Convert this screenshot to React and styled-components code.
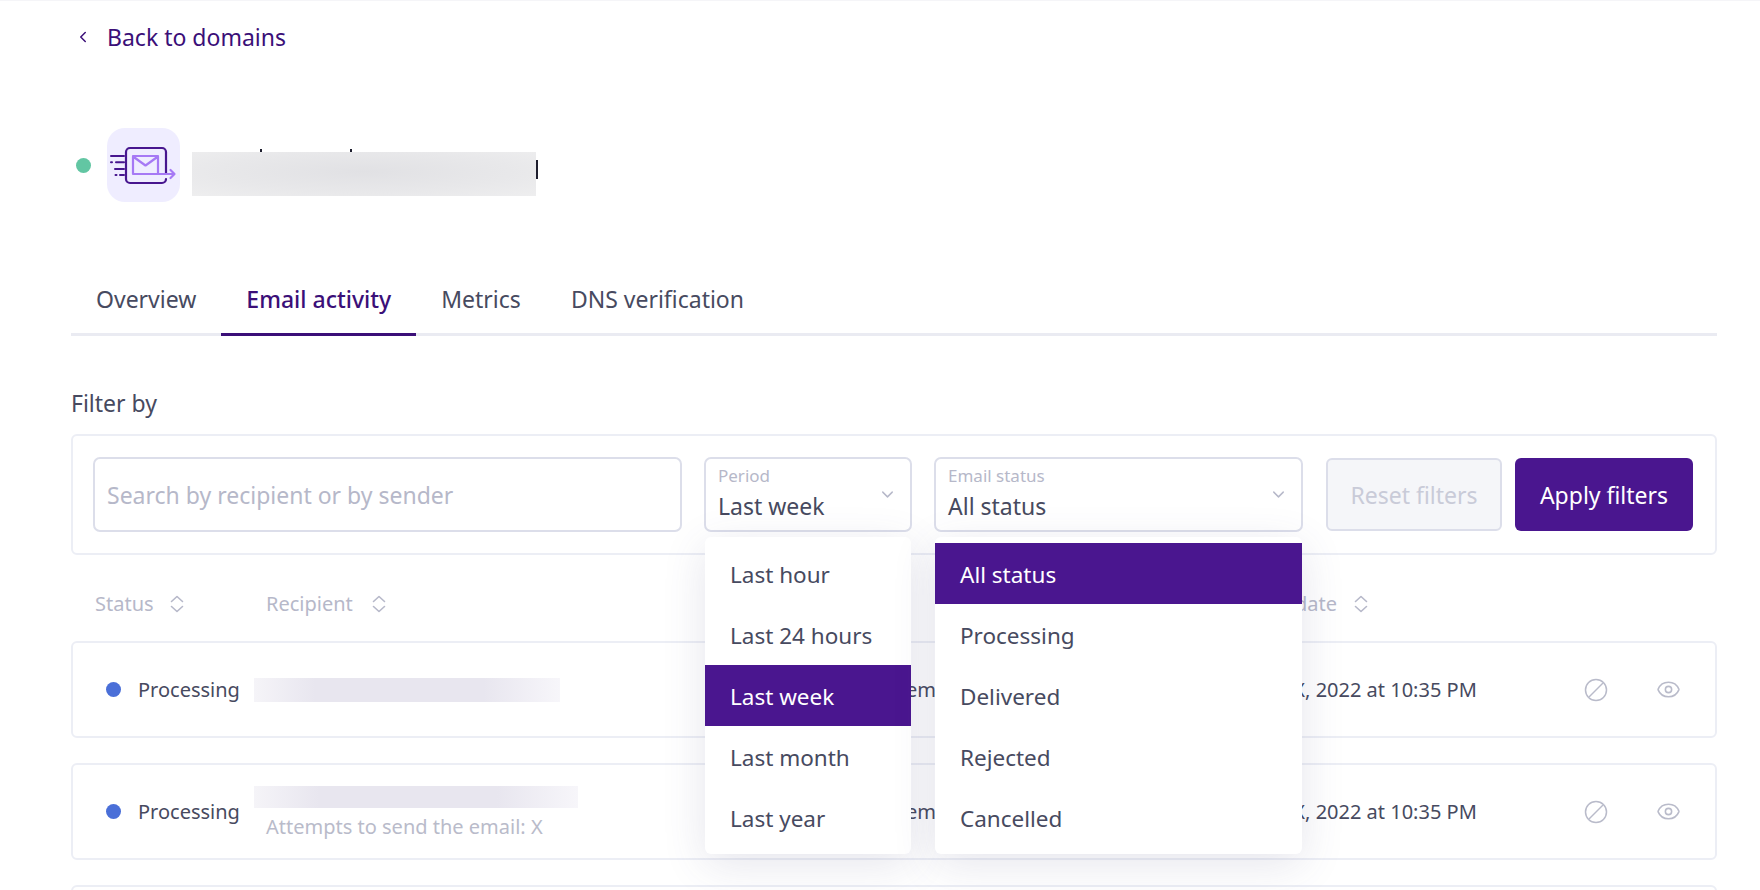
import styled, { createGlobalStyle } from "styled-components";
import { ChevronLeft, ChevronDown, Eye } from "lucide-react";

const GlobalStyle = createGlobalStyle`
  html, body { margin: 0; padding: 0; background: #ffffff; }
  body {
    font-family: "Noto Sans", "Open Sans", sans-serif;
    color: #474a60;
    overflow: hidden;
    height: 890px;
  }
`;

const Page = styled.div`
  height: 890px;
  box-sizing: border-box;
  padding: 0 43px 0 71px;
  overflow: hidden;
  border-top: 1px solid #f5f5f8;
`;

const BackLink = styled.a`
  display: flex;
  align-items: center;
  height: 72px;
  gap: 15px;
  color: #3b0f78;
  font-size: 23px;
  margin-left: 3px;
`;

const DomainHead = styled.div`
  display: flex;
  align-items: center;
  margin-top: 55px;
  height: 74px;
`;

const StatusDot = styled.span`
  flex: none;
  width: 15px;
  height: 15px;
  border-radius: 50%;
  background: ${(p) => p.$color};
`;

const HeadDot = styled(StatusDot)`
  margin-left: 5px;
`;

const LogoTile = styled.div`
  width: 73px;
  height: 74px;
  margin-left: 16px;
  border-radius: 18px;
  background: #efedff;
  svg { display: block; }
`;

const RedactedTitle = styled.div`
  position: relative;
  align-self: flex-start;
  width: 344px;
  height: 44px;
  margin: 24px 0 0 12px;
  background: radial-gradient(ellipse at 50% 45%, #e1e1e4 0%, #e8e8ea 60%, #eeeeef 100%);

  &::before, &::after {
    content: "";
    position: absolute;
    background: #1e1e2e;
  }
  &::before { left: 68px; top: -3px; width: 2px; height: 3px; box-shadow: 90px 0 0 #1e1e2e; }
  &::after { right: -2px; top: 8px; width: 2px; height: 19px; }
`;

const TabBar = styled.div`
  display: flex;
  margin-top: 70px;
  border-bottom: 3px solid #eaebf2;
`;

const Tab = styled.div`
  padding: 0 25px;
  height: 61px;
  line-height: 54px;
  font-size: 23px;
  font-weight: ${(p) => (p.$active ? 500 : 400)};
  margin-bottom: -3px;
  box-sizing: content-box;
  color: ${(p) => (p.$active ? "#3b0f78" : "#474a60")};
  border-bottom: 3px solid ${(p) => (p.$active ? "#3b0f78" : "transparent")};
`;

const FilterTitle = styled.div`
  margin-top: 51px;
  height: 32px;
  line-height: 32px;
  font-size: 23px;
`;

const FilterPanel = styled.div`
  display: flex;
  align-items: center;
  margin-top: 15px;
  height: 121px;
  box-sizing: border-box;
  padding: 0 22px 0 20px;
  border: 2px solid #eceef5;
  border-radius: 6px;
`;

const SearchBox = styled.div`
  width: 589px;
  height: 75px;
  box-sizing: border-box;
  padding: 0 12px;
  display: flex;
  align-items: center;
  border: 2px solid #dcdeea;
  border-radius: 7px;
  font-size: 23px;
  color: #b6b8c9;
`;

const SelectWrap = styled.div`
  position: relative;
  flex: none;
  width: ${(p) => p.$width}px;
  height: 75px;
  margin-left: ${(p) => p.$gap}px;
  box-sizing: border-box;
  padding: 7px 12px 0;
  border: 2px solid #dcdeea;
  border-radius: 7px;
  background: #fff;
`;

const SelectLabel = styled.div`
  font-size: 17px;
  line-height: 20px;
  color: #b6b8c9;
`;

const SelectValue = styled.div`
  font-size: 23px;
  line-height: 30px;
  margin-top: 5px;
`;

const SelectChevron = styled(ChevronDown)`
  position: absolute;
  right: 13px;
  top: 26px;
  color: #b6b8c9;
`;

const Menu = styled.div`
  position: absolute;
  left: -1px;
  right: -1px;
  top: 78px;
  z-index: 5;
  padding: 6px 0;
  background: #fff;
  border-radius: 6px;
  box-shadow: 0 10px 44px rgba(70, 70, 120, 0.14);
`;

const MenuItem = styled.div`
  height: 61px;
  line-height: 63px;
  padding-left: 25px;
  font-size: 22.5px;
  color: ${(p) => (p.$selected ? "#fff" : "#474a60")};
  background: ${(p) => (p.$selected ? "#4a168f" : "transparent")};
`;

const ResetButton = styled.div`
  width: 176px;
  height: 73px;
  margin-left: 23px;
  box-sizing: border-box;
  display: flex;
  align-items: center;
  justify-content: center;
  font-size: 23px;
  color: #c9cbd8;
  background: #f5f6f9;
  border: 2px solid #dcdeea;
  border-radius: 6px;
`;

const ApplyButton = styled.div`
  width: 178px;
  height: 73px;
  margin-left: 13px;
  display: flex;
  align-items: center;
  justify-content: center;
  font-size: 23px;
  color: #fff;
  background: #4a168f;
  border-radius: 6px;
`;

const rowColumns = "171px 500px 192px 560px 1fr";

const TableHead = styled.div`
  display: grid;
  grid-template-columns: ${rowColumns};
  align-items: center;
  height: 86px;
  box-sizing: border-box;
  padding-top: 11px;
  font-size: 20px;
  color: #b6b8c9;
`;

const HeadCell = styled.div`
  display: flex;
  align-items: center;
  gap: ${(p) => p.$gap || 17}px;
  padding-left: ${(p) => p.$pad || 0}px;
`;

const Row = styled.div`
  display: grid;
  grid-template-columns: ${rowColumns};
  align-items: center;
  height: 97px;
  box-sizing: border-box;
  margin-bottom: 25px;
  border: 2px solid #eceef5;
  border-radius: 6px;
  font-size: 20px;
`;

const StatusCell = styled.div`
  display: flex;
  align-items: center;
  gap: 17px;
  padding-left: 33px;
`;

const RecipientCell = styled.div`
  align-self: stretch;
  display: flex;
  flex-direction: column;
  justify-content: ${(p) => (p.$top ? "flex-start" : "center")};
  padding-top: ${(p) => (p.$top ? 21 : 0)}px;
`;

const Redacted = styled.div`
  height: ${(p) => p.$height}px;
  width: ${(p) => p.$width}px;
  margin-left: 10px;
  background: linear-gradient(90deg, #f5f4f8 0%, #e8e6ef 20%, #e8e6ef 75%, #f7f6fa 100%);
`;

const Attempts = styled.div`
  margin: 6px 0 0 22px;
  font-size: 20px;
  line-height: 26px;
  color: #b9bbca;
`;

const SubjectCell = styled.div`
  text-align: right;
  white-space: nowrap;
`;

const DateCell = styled.div`
  white-space: nowrap;
  padding-left: 317px;
`;

const Actions = styled.div`
  display: flex;
  align-items: center;
  gap: 48px;
  padding-left: 88px;
  color: #b9bbca;
  svg { display: block; }
`;

const SortIcon = () => (
  <svg width="14" height="18" viewBox="0 0 14 18" fill="none" stroke="#b6b8c9" strokeWidth="1.6" strokeLinecap="round" strokeLinejoin="round">
    <path d="M1.5 6.5 7 1.5l5.5 5M1.5 11.5 7 16.5l5.5-5" />
  </svg>
);

const BanIcon = () => (
  <svg width="24" height="24" viewBox="0 0 24 24" fill="none" stroke="currentColor" strokeWidth="1.5">
    <circle cx="12" cy="12" r="10.5" />
    <path d="M5 19 19 5" />
  </svg>
);

const MailLogo = () => (
  <svg width="73" height="74" viewBox="0 0 73 74" fill="none" strokeLinecap="round" strokeLinejoin="round">
    <path d="M59 45V24a4 4 0 0 0-4-4H23a4 4 0 0 0-4 4v27a4 4 0 0 0 4 4h32a4 4 0 0 0 4-4" stroke="#47168f" strokeWidth="2.2" />
    <path d="M4 28h13M4 34.300h1M9 34.300h8M8 41h9M8.500 47h1M13 47h4" stroke="#47168f" strokeWidth="2" />
    <path d="M26 28h25v18H26zM26 28.500l12.500 9 12.500-9M51 46h16M63.500 42l4 4-4 4" stroke="#a679f5" strokeWidth="2.2" />
  </svg>
);

const periods = ["Last hour", "Last 24 hours", "Last week", "Last month", "Last year"];
const statuses = ["All status", "Processing", "Delivered", "Rejected", "Cancelled"];

const EmailRow = ({ attempts }) => (
  <Row>
    <StatusCell>
      <StatusDot $color="#4a6fd8" />
      Processing
    </StatusCell>
    <RecipientCell $top={attempts}>
      {attempts ? <Redacted $width={324} $height={22} /> : <Redacted $width={306} $height={24} />}
      {attempts && <Attempts>Attempts to send the email: X</Attempts>}
    </RecipientCell>
    <SubjectCell>Test system</SubjectCell>
    <DateCell>XXX X, 2022 at 10:35 PM</DateCell>
    <Actions>
      <BanIcon />
      <Eye size={25} strokeWidth={1.5} />
    </Actions>
  </Row>
);

export default function App() {
  return (
    <Page>
      <GlobalStyle />
      <BackLink>
        <ChevronLeft size={18} strokeWidth={2} />
        Back to domains
      </BackLink>
      <DomainHead>
        <HeadDot $color="#62c6a3" />
        <LogoTile>
          <MailLogo />
        </LogoTile>
        <RedactedTitle />
      </DomainHead>
      <TabBar>
        <Tab>Overview</Tab>
        <Tab $active>Email activity</Tab>
        <Tab>Metrics</Tab>
        <Tab>DNS verification</Tab>
      </TabBar>
      <FilterTitle>Filter by</FilterTitle>
      <FilterPanel>
        <SearchBox>Search by recipient or by sender</SearchBox>
        <SelectWrap $width={208} $gap={22}>
          <SelectLabel>Period</SelectLabel>
          <SelectValue>Last week</SelectValue>
          <SelectChevron size={19} strokeWidth={1.8} />
          <Menu>
            {periods.map((p) => (
              <MenuItem key={p} $selected={p === "Last week"}>{p}</MenuItem>
            ))}
          </Menu>
        </SelectWrap>
        <SelectWrap $width={369} $gap={22}>
          <SelectLabel>Email status</SelectLabel>
          <SelectValue>All status</SelectValue>
          <SelectChevron size={19} strokeWidth={1.8} />
          <Menu>
            {statuses.map((s) => (
              <MenuItem key={s} $selected={s === "All status"}>{s}</MenuItem>
            ))}
          </Menu>
        </SelectWrap>
        <ResetButton>Reset filters</ResetButton>
        <ApplyButton>Apply filters</ApplyButton>
      </FilterPanel>
      <TableHead>
        <HeadCell $pad={24} $gap={16}>Status <SortIcon /></HeadCell>
        <HeadCell $pad={24} $gap={19}>Recipient <SortIcon /></HeadCell>
        <div />
        <HeadCell $pad={314}>Sent date <SortIcon /></HeadCell>
        <div />
      </TableHead>
      <EmailRow />
      <EmailRow attempts />
      <Row />
    </Page>
  );
}
